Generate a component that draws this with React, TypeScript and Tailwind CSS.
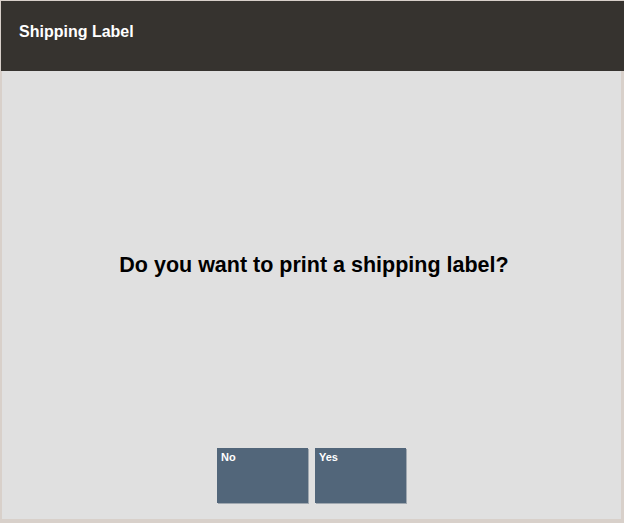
import React from 'react';

const App: React.FC = () => {
  return (
    <div
      className="flex flex-col w-[624px] h-[523px] bg-[#d8d0ca] pt-px"
      style={{ fontFamily: '"Liberation Sans", Arial, sans-serif' }}
    >
      {/* Header */}
      <header className="h-[70px] ml-px bg-[#36332f] flex items-center px-[18px] pb-[9px]">
        <h1 className="text-white font-bold text-[16px]">Shipping Label</h1>
      </header>

      {/* Body */}
      <main className="flex-1 ml-[2px] mr-[3px] mb-[4px] bg-[#e0e0e0] flex flex-col">
        <div className="flex-1 flex items-center justify-center pt-[12px] pl-[5px]">
          <p className="text-black font-bold text-[21.5px]">Do you want to print a shipping label?</p>
        </div>
        <div className="flex justify-center gap-[7px] pb-[16px]">
          {['No', 'Yes'].map((label) => (
            <button
              key={label}
              className="w-[91px] h-[55px] bg-[#52667a] text-white font-bold text-[11px] text-left px-[4px] py-[1px] flex items-start shadow-[1px_1px_0_#a0a8b0]"
            >
              {label}
            </button>
          ))}
        </div>
      </main>
    </div>
  );
};

export default App;
